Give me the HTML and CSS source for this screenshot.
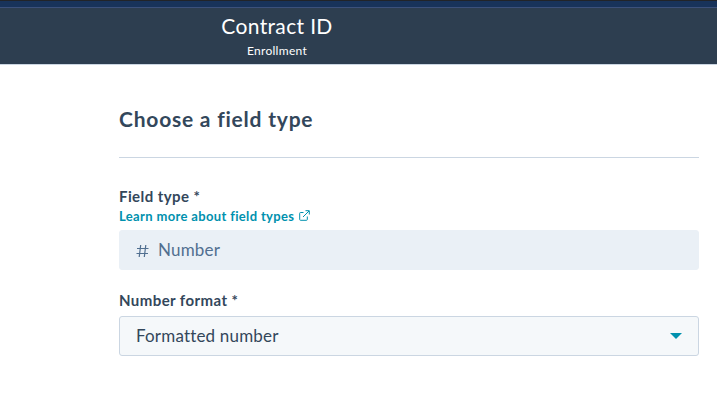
FILE: index.html
```html
<!DOCTYPE html>
<html lang="en">
<head>
    <meta charset="UTF-8">
    <title>Contract ID</title>
    <link rel="stylesheet" href="styles.css">
</head>
<body>
<div class="nav-bar"></div>
<header class="header">
    <div class="header-text">
        <h1>Contract ID</h1>
        <div class="subtitle">Enrollment</div>
    </div>
</header>

<main class="content">
    <h2>Choose a field type</h2>

    <div class="field">
        <div class="label">Field type *</div>
        <a class="help-link" href="#">
            <span>Learn more about field types</span>
            <svg width="11" height="11" viewBox="0 0 11 11" fill="none" stroke="currentColor">
                <path d="M4.5 2.5H1.5Q.7 2.5 .7 3.3V9.5Q.7 10.3 1.5 10.3H7.5Q8.3 10.3 8.3 9.5V6.5M6.5 .7H10.3V4.5M10 1L4 7"/>
            </svg>
        </a>
        <div class="select disabled">
            <svg class="hash" width="13" height="12" viewBox="0 0 13 12" fill="none" stroke="currentColor" stroke-width="1.2">
                <path d="M4.7 0L3.2 12M9.8 0L8.3 12M1 3.5H12.5M.5 8.5H12"/>
            </svg>
            <span>Number</span>
        </div>
    </div>

    <div class="field">
        <div class="label">Number format *</div>
        <div class="select">
            <span>Formatted number</span>
            <div class="caret"></div>
        </div>
    </div>
</main>
</body>
</html>
```

FILE: styles.css
```css
* {
    box-sizing: border-box;
}
body {
    margin: 0;
    background-color: #fff;
    color: #33475b;
    font-family: Lato, "Liberation Sans", sans-serif;
}
h1, h2 {
    margin: 0;
}
.nav-bar {
    height: 8px;
    background-color: #18335a;
    border-top: 1px solid #222428;
    border-bottom: 1px solid #3c517b;
}
.header {
    height: 57px;
    padding-top: 4px;
    background-color: #2d3e50;
    border-bottom: 1px solid #cbd6e2;
    color: #fff;
}
.header-text {
    width: 554px;
    text-align: center;
}
.header h1 {
    font-size: 21px;
    font-weight: 400;
    line-height: 28px;
    letter-spacing: 0.35px;
}
.subtitle {
    font-size: 12px;
    line-height: 22px;
    letter-spacing: 0.3px;
}
.content {
    width: 580px;
    margin-left: 119px;
    padding-top: 39px;
}
h2 {
    height: 54px;
    margin-bottom: 29px;
    border-bottom: 1px solid #cbd6e2;
    font-size: 21px;
    line-height: 30px;
    letter-spacing: 0.78px;
}
.field {
    margin-bottom: 21px;
}
.label {
    height: 20px;
    font-size: 15px;
    font-weight: 700;
    line-height: 18px;
    letter-spacing: 0.42px;
}
.help-link {
    display: flex;
    align-items: center;
    gap: 5px;
    height: 18px;
    margin-bottom: 5px;
    color: #0091ae;
    font-size: 13px;
    font-weight: 700;
    line-height: 18px;
    letter-spacing: 0.35px;
    text-decoration: none;
}
.help-link svg {
    margin-bottom: 2px;
}
.label + .select {
    margin-top: 5px;
}
.select {
    display: flex;
    align-items: center;
    height: 40px;
    padding: 0 16px;
    background-color: #f5f8fa;
    border: 1px solid #cbd6e2;
    border-radius: 3px;
    font-size: 17px;
    letter-spacing: 0.18px;
}
.select span {
    padding-bottom: 1px;
}
.select.disabled {
    background-color: #eaf0f6;
    border-color: #eaf0f6;
    color: #516f90;
}
.hash {
    margin-top: 2px;
    margin-right: 9px;
}
.caret {
    margin-left: auto;
    border: 6px solid transparent;
    border-top-color: #0091ae;
    border-bottom: 0;
}
```
